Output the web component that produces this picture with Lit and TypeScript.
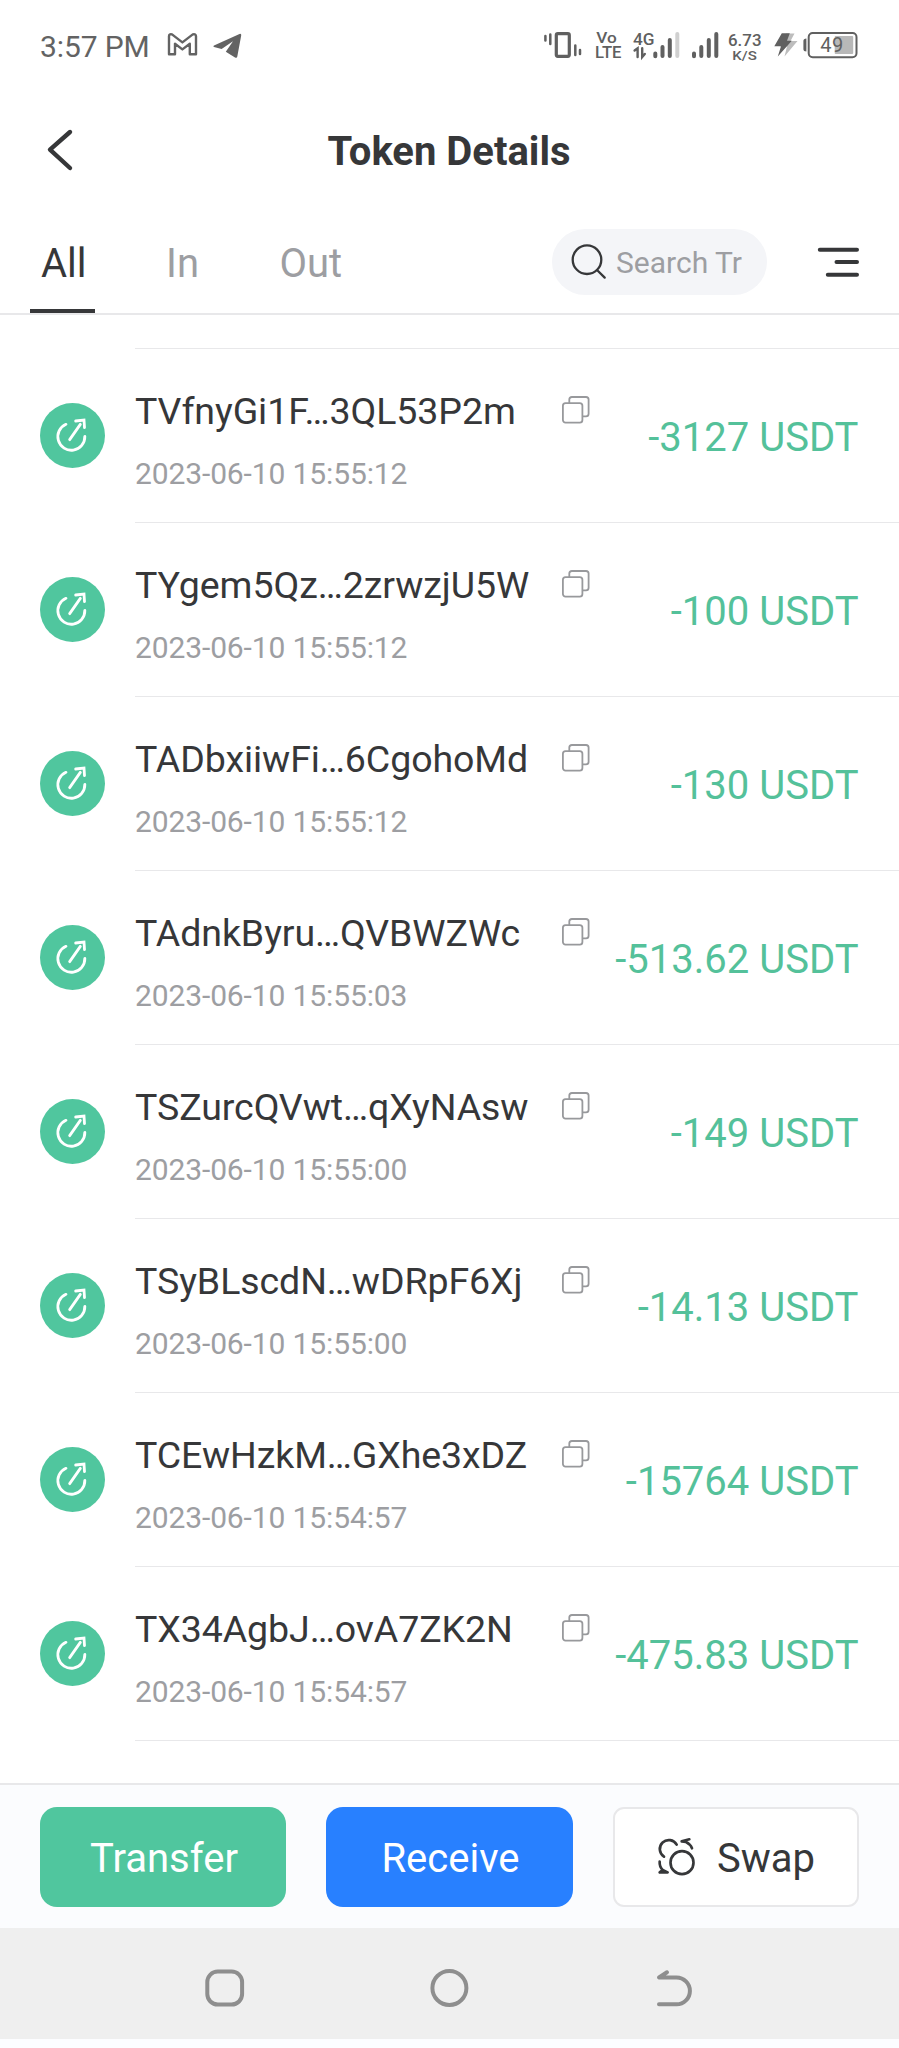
import { LitElement, html, css } from "lit";
import { customElement, property } from "lit/decorators.js";

interface Transfer {
  address: string;
  time: string;
  amount: string;
}

const TRANSFERS: Transfer[] = [
  { address: "TVfnyGi1F…3QL53P2m", time: "2023-06-10 15:55:12", amount: "-3127 USDT" },
  { address: "TYgem5Qz…2zrwzjU5W", time: "2023-06-10 15:55:12", amount: "-100 USDT" },
  { address: "TADbxiiwFi…6CgohoMd", time: "2023-06-10 15:55:12", amount: "-130 USDT" },
  { address: "TAdnkByru…QVBWZWc", time: "2023-06-10 15:55:03", amount: "-513.62 USDT" },
  { address: "TSZurcQVwt…qXyNAsw", time: "2023-06-10 15:55:00", amount: "-149 USDT" },
  { address: "TSyBLscdN…wDRpF6Xj", time: "2023-06-10 15:55:00", amount: "-14.13 USDT" },
  { address: "TCEwHzkM…GXhe3xDZ", time: "2023-06-10 15:54:57", amount: "-15764 USDT" },
  { address: "TX34AgbJ…ovA7ZK2N", time: "2023-06-10 15:54:57", amount: "-475.83 USDT" },
];

@customElement("status-bar")
export class StatusBar extends LitElement {
  static styles = css`
    :host { display: flex; align-items: flex-start; height: 92px; padding: 26px 37px 0 40px; box-sizing: border-box; color: #636363; }
    .time { font-size: 30px; line-height: 42px; white-space: nowrap; width: 126px; font-weight: 400; letter-spacing: -0.1px; }
    .apps { display: block; }
    .signals { display: block; margin-left: auto; }
    .signals text { fill: #606060; font-family: Roboto, sans-serif; font-weight: 500; }
    .signals .level { font-weight: 400; }
  `;
  render() {
    return html`
      <span class="time">3:57 PM</span>
      <svg class="apps" width="80" height="36" viewBox="166 26 80 36">
        <path d="M169 36.3Q169 33.6 172 34.4L182.4 42.4L192.8 34.4Q196 33.6 196 36.3V54.2H189.8V43.8L182.4 49.4L175 43.8V54.2H169Z" fill="none" stroke="#636363" stroke-width="2.4" stroke-linejoin="round"/>
        <path d="M214 45.6L239.5 34Q241.6 33.4 241.2 35.6L237.3 56.6Q236.8 58.6 235 57.4L225.8 51.8L233 41.2L221.6 48.9L214 47Q212.6 46.3 214 45.6Z" fill="#636363"/>
      </svg>
      <svg class="signals" width="322" height="36" viewBox="540 26 322 36">
        <g fill="none" stroke="#606060" stroke-linecap="round">
          <rect x="556.3" y="33.7" width="13" height="22.6" rx="1.5" stroke-width="3.2"/>
          <path d="M545.4 36V40.4M550.3 34.5V44M575.3 45.5V55M580 50V54" stroke-width="2.5"/>
          <path d="M655.3 53.6V56.2M662.5 47V56M669.8 40V56M694 53.6V56.2M701.3 47V56M708.8 40V56M716.3 34V56" stroke-width="4"/>
          <path d="M677.3 34V56" stroke="#d0d0d0" stroke-width="4"/>
          <path d="M634.6 50.5L637.6 48.3V57M642.2 48.3V57L644.8 54" stroke-width="2.4"/>
        </g>
        <text x="596.3" y="42.6" font-size="14.5" textLength="20.5" lengthAdjust="spacingAndGlyphs">Vo</text>
        <text x="595" y="58.3" font-size="16.5" textLength="26.5" lengthAdjust="spacingAndGlyphs">LTE</text>
        <text x="633" y="44.5" font-size="17" textLength="21.5" lengthAdjust="spacingAndGlyphs">4G</text>
        <text x="728" y="45.7" font-size="16.8" textLength="33.5" lengthAdjust="spacingAndGlyphs">6.73</text>
        <text x="732.3" y="60" font-size="13.5" textLength="24.5" lengthAdjust="spacingAndGlyphs">K/S</text>
        <path d="M786 33.5H794.5L790.5 41H797.5L784.5 56.5L787 46.5H780Z" fill="#bdbdbd"/>
        <path d="M781.8 33.3H789.8L787 40.7H791.8L777.8 56.5L781 46.3H774.3Z" fill="#606060"/>
        <rect x="834.7" y="36" width="18.5" height="18" rx="1" fill="#b8b8b8"/>
        <rect x="808.7" y="33" width="47.8" height="24.2" rx="4" fill="none" stroke="#606060" stroke-width="2"/>
        <path d="M806.4 38.5V51.5Q803.4 51.5 803.4 49V41Q803.4 38.5 806.4 38.5Z" fill="#606060"/>
        <text class="level" x="820.2" y="51.8" font-size="20" textLength="23">49</text>
      </svg>
    `;
  }
}

@customElement("transfer-row")
export class TransferRow extends LitElement {
  @property({ attribute: false }) item!: Transfer;
  static styles = css`
    :host { display: flex; align-items: stretch; height: 174px; padding-left: 40px; box-sizing: border-box; }
    .badge { display: block; flex: none; width: 65px; height: 65px; margin: 54px 30px 0 0; }
    .body { flex: 1; display: flex; box-sizing: border-box; border-bottom: 1px solid #e8e8ea; padding-right: 40.5px; }
    .info { flex: none; width: 427px; padding-top: 40px; display: flex; flex-direction: column; gap: 23px; white-space: nowrap; }
    .address { font-size: 37.5px; line-height: 44px; color: #363739; letter-spacing: -0.08px; }
    .date { font-size: 30px; line-height: 36px; color: #9d9ea2; letter-spacing: -0.12px; }
    .copy { display: block; flex: none; width: 28px; height: 28px; margin-top: 47px; }
    .amount { margin-left: auto; align-self: center; font-size: 40px; line-height: 48px; padding-top: 4px; color: #54c19a; white-space: nowrap; }
  `;
  render() {
    return html`
      <svg class="badge" viewBox="30 39 195 195">
        <circle cx="127.5" cy="136.5" r="97.5" fill="#50c69e"/>
        <g fill="none" stroke="#fff" stroke-width="8.4" stroke-linecap="round" stroke-linejoin="round">
          <path d="M108 103A40.5 40.5 0 1 0 164.5 139"/>
          <path d="M119 149L151 103"/>
          <path d="M137 93L162 90L163.5 113" stroke-linejoin="miter"/>
        </g>
      </svg>
      <div class="body">
        <div class="info">
          <span class="address">${this.item.address}</span>
          <span class="date">${this.item.time}</span>
        </div>
        <svg class="copy" viewBox="0 0 28 28" fill="none" stroke="#98999c" stroke-width="1.8">
          <path d="M7.3 7V3.6Q7.3 1 9.9 1H24Q26.6 1 26.6 3.6V17.7Q26.6 20.3 24 20.3H20.5"/>
          <rect x="0.9" y="7.2" width="19.5" height="19.5" rx="2.6"/>
        </svg>
        <span class="amount">${this.item.amount}</span>
      </div>
    `;
  }
}

@customElement("app-root")
export class AppRoot extends LitElement {
  static styles = css`
    :host { display: flex; flex-direction: column; width: 899px; height: 2048px; overflow: hidden; background: #fff; font-family: Roboto, "Noto Sans", sans-serif; color: #363739; }
    .header { display: grid; grid-template-columns: 100px 1fr 100px; height: 118px; align-items: start; }
    .back { display: block; margin: 36px 0 0 44px; }
    .title { text-align: center; font-size: 40px; line-height: 46px; font-weight: 700; margin-top: 37px; padding-right: 1px; }
    .tabs { display: flex; height: 105px; box-sizing: border-box; border-bottom: 2px solid #e8e8ea; }
    .tab { font-size: 40px; line-height: 48px; height: 103px; box-sizing: border-box; padding-top: 30px; color: #9d9ea2; }
    .tab.active { color: #363739; width: 65px; margin-left: 30px; padding-left: 11px; border-bottom: 4px solid #363739; }
    .in { margin-left: 71px; width: 113.5px; }
    .search { margin: 19px 0 0 auto; width: 215px; height: 66px; border-radius: 33px; background: #f4f5f8; display: flex; align-items: center; padding-left: 19px; box-sizing: border-box; font-size: 30px; color: #9d9ea2; gap: 9px; white-space: nowrap; }
    .search span { padding-top: 1px; }
    .menu { display: block; margin: 35px 38px 0 49px; }
    .list { flex: none; height: 1468px; overflow: hidden; }
    .lead { height: 34px; margin-left: 135px; box-sizing: border-box; border-bottom: 1px solid #e8e8ea; }
    .actions { display: grid; grid-template-columns: 246px 247px 246px; gap: 40px; height: 145px; padding: 21.6px 40px 0; box-sizing: border-box; border-top: 2px solid #e8e8ea; background: #fbfcfe; }
    .button { display: flex; align-items: center; justify-content: center; gap: 20px; height: 100px; box-sizing: border-box; border-radius: 17px; color: #fff; font-size: 40px; padding-top: 4px; }
    .transfer { background: #50c69e; padding-left: 2px; }
    .receive { background: #2880ff; padding-left: 2px; }
    .swap { background: #fff; color: #363739; border: 2px solid #e8e8ea; border-radius: 11px; }
    .swap svg { margin-bottom: 4px; }
    .nav { height: 111px; background: #efefef; }
    .nav svg { display: block; }
    .edge { flex: 1; background: #fcfdff; }
  `;
  render() {
    return html`
      <status-bar></status-bar>
      <div class="header">
        <svg class="back" width="30" height="44" viewBox="44 128 30 44"><path d="M70 132L50 149.6L70 168" fill="none" stroke="#363739" stroke-width="4.4" stroke-linecap="round" stroke-linejoin="round"/></svg>
        <div class="title">Token Details</div>
      </div>
      <div class="tabs">
        <div class="tab active">All</div>
        <div class="tab in">In</div>
        <div class="tab">Out</div>
        <div class="search">
          <svg width="36" height="36" viewBox="571 244 36 36" fill="none" stroke="#363739" stroke-width="2.3" stroke-linecap="round"><circle cx="587" cy="259.7" r="14.3"/><path d="M597.5 270.5L604.7 277.6"/></svg>
          <span>Search Tr</span>
        </div>
        <svg class="menu" width="45" height="34" viewBox="816 245 45 34"><path d="M819.8 249.7H857M836.5 262H857M827.8 274.7H857" stroke="#363739" stroke-width="4" stroke-linecap="round"/></svg>
      </div>
      <div class="list">
        <div class="lead"></div>
        ${TRANSFERS.map((t) => html`<transfer-row .item=${t}></transfer-row>`)}
      </div>
      <div class="actions">
        <div class="button transfer">Transfer</div>
        <div class="button receive">Receive</div>
        <div class="button swap">
          <svg width="40" height="40" viewBox="620 348 120 120" fill="none" stroke="#363739" stroke-width="8" stroke-linecap="round" stroke-linejoin="round">
            <circle cx="695" cy="425" r="34.5"/>
            <path d="M641 407A27 27 0 1 1 679 371"/>
            <path d="M717 355L694 361L707 363Q720 369 725 382"/>
            <path d="M628 422Q627 437 637 447L628 454H652L637 447"/>
          </svg>
          <span>Swap</span>
        </div>
      </div>
      <div class="nav">
        <svg width="899" height="111" viewBox="0 1928 899 111" fill="none" stroke="#8e8e8e" stroke-width="4" stroke-linecap="round" stroke-linejoin="round">
          <rect x="207.3" y="1971.6" width="34.8" height="33" rx="10.5"/>
          <circle cx="449.4" cy="1988" r="17"/>
          <path d="M667 1972.3L659 1977.5H676.5A13.4 13.4 0 0 1 676.5 2004.3H659"/>
        </svg>
      </div>
      <div class="edge"></div>
    `;
  }
}
